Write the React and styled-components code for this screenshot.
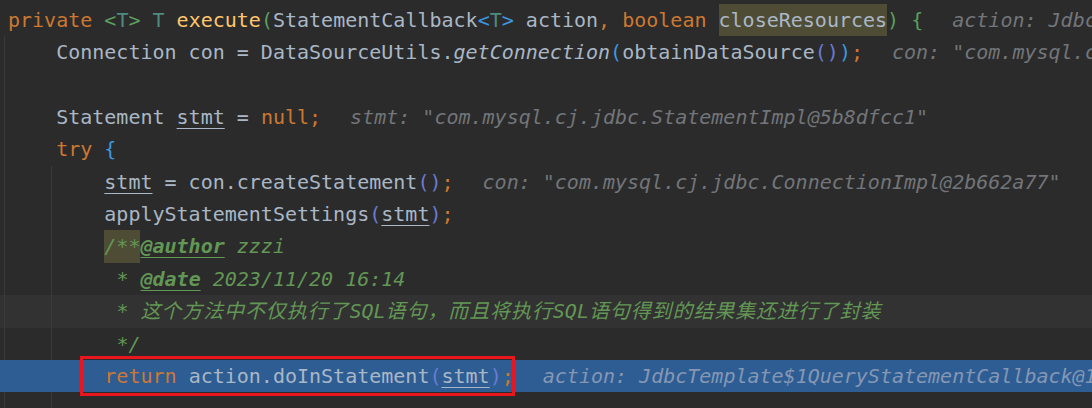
import React from "react";
import styled, { createGlobalStyle } from "styled-components";

const colors = {
  bg: "#2B2B2B",
  caretRow: "#323232",
  execRow: "#2E5D94",
  guide: "#3A3A3A",
  text: "#A9B7C6",
  keyword: "#CC7832",
  method: "#FFC66D",
  typeParam: "#4E8A80",
  doc: "#629755",
  hint: "#727579",
  hintOnExec: "#8497B3",
  parenGreen: "#5A9F5E",
  parenBlue: "#3C98E0",
  parenPurple: "#6A7BD3",
  usage: "#4F4C36",
  box: "#E8161F",
};

const GlobalStyle = createGlobalStyle`
  html, body {
    margin: 0;
    padding: 0;
    background: ${colors.bg};
  }
`;

const Editor = styled.div`
  width: 1092px;
  height: 408px;
  overflow: hidden;
  background: ${colors.bg};
  padding-top: 3.6px;
  box-sizing: border-box;
  font-family: "DejaVu Sans Mono", "Noto Sans CJK SC", monospace;
  font-size: 20px;
  color: ${colors.text};
`;

const guideAt = (x) =>
  `linear-gradient(to right, transparent ${x}px, ${colors.guide} ${x}px, ${colors.guide} ${x + 1}px, transparent ${x + 1}px)`;

const Line = styled.div`
  position: relative;
  height: 32.4px;
  line-height: 32.4px;
  padding-left: 8px;
  white-space: pre;
  background-color: ${(p) =>
    p.$exec ? colors.execRow : p.$caret ? colors.caretRow : "transparent"};
  background-image: ${(p) =>
    p.$exec || !p.$guides
      ? "none"
      : p.$guides.map(guideAt).join(", ")};
`;

const Tok = styled.span`
  color: ${(p) => p.$c || colors.text};
  font-style: ${(p) => (p.$i ? "italic" : "normal")};
  font-weight: ${(p) => (p.$b ? "bold" : "normal")};
  text-decoration: ${(p) => (p.$u ? "underline" : "none")};
  text-underline-offset: 4px;
  text-decoration-thickness: 1px;
  background: ${(p) => (p.$hl ? colors.usage : "transparent")};
  display: inline-block;
  height: 32.4px;
`;

const Cjk = styled.span`
  letter-spacing: 0.9px;
`;

const Hint = styled.span`
  margin-left: 29px;
  color: ${(p) => (p.$exec ? colors.hintOnExec : colors.hint)};
  font-style: italic;
`;

const RedBox = styled.span`
  position: absolute;
  left: 80px;
  top: -4px;
  width: 435px;
  height: 40px;
  border: 3px solid ${colors.box};
  box-sizing: border-box;
  pointer-events: none;
`;

const K = (props) => <Tok $c={colors.keyword} {...props} />;
const P = ({ $c, children }) => <Tok $c={$c}>{children}</Tok>;
const Doc = (props) => <Tok $c={colors.doc} $i {...props} />;

const G1 = [4];
const G2 = [4, 51];

export default function App() {
  return (
    <>
      <GlobalStyle />
      <Editor>
        <Line>
          <K>private </K>
          <P $c={colors.parenGreen}>&lt;</P>
          <Tok $c={colors.typeParam}>T</Tok>
          <P $c={colors.parenGreen}>&gt;</P>
          <Tok> </Tok>
          <Tok $c={colors.typeParam}>T </Tok>
          <Tok $c={colors.method}>execute</Tok>
          <P $c={colors.parenGreen}>(</P>
          <Tok>StatementCallback</Tok>
          <P $c={colors.parenBlue}>&lt;</P>
          <Tok $c={colors.typeParam}>T</Tok>
          <P $c={colors.parenBlue}>&gt;</P>
          <Tok> action</Tok>
          <K>, boolean </K>
          <Tok $hl>closeResources</Tok>
          <P $c={colors.parenGreen}>)</P>
          <Tok> </Tok>
          <P $c={colors.parenGreen}>{"{"}</P>
          <Hint>action: JdbcTemplate$1QueryStatementCallback@1d3b4f6e</Hint>
        </Line>

        <Line $guides={G1}>
          <Tok>{"    Connection con = DataSourceUtils."}</Tok>
          <Tok $i>getConnection</Tok>
          <P $c={colors.parenBlue}>(</P>
          <Tok>obtainDataSource</Tok>
          <P $c={colors.parenPurple}>()</P>
          <P $c={colors.parenBlue}>)</P>
          <K>;</K>
          <Hint>con: "com.mysql.cj.jdbc.ConnectionImpl@2b662a77"</Hint>
        </Line>

        <Line $guides={G1} />

        <Line $guides={G1}>
          <Tok>{"    Statement "}</Tok>
          <Tok $u>stmt</Tok>
          <Tok> = </Tok>
          <K>null;</K>
          <Hint>stmt: "com.mysql.cj.jdbc.StatementImpl@5b8dfcc1"</Hint>
        </Line>

        <Line $guides={G1}>
          <K>{"    try "}</K>
          <P $c={colors.parenBlue}>{"{"}</P>
        </Line>

        <Line $guides={G2}>
          <Tok>{"        "}</Tok>
          <Tok $u>stmt</Tok>
          <Tok> = con.createStatement</Tok>
          <P $c={colors.parenPurple}>()</P>
          <K>;</K>
          <Hint>con: "com.mysql.cj.jdbc.ConnectionImpl@2b662a77"</Hint>
        </Line>

        <Line $guides={G2}>
          <Tok>{"        applyStatementSettings"}</Tok>
          <P $c={colors.parenPurple}>(</P>
          <Tok $u>stmt</Tok>
          <P $c={colors.parenPurple}>)</P>
          <K>;</K>
        </Line>

        <Line $guides={G2}>
          <Tok>{"        "}</Tok>
          <Doc $hl>/**</Doc>
          <Doc $b $u>@author</Doc>
          <Doc> zzzi</Doc>
        </Line>

        <Line $guides={G2}>
          <Tok>{"         "}</Tok>
          <Doc>* </Doc>
          <Doc $b $u>@date</Doc>
          <Doc> 2023/11/20 16:14</Doc>
        </Line>

        <Line $guides={G2} $caret>
          <Tok>{"         "}</Tok>
          <Doc>
            * <Cjk>这个方法中不仅执行了</Cjk>SQL<Cjk>语句，而且将执行</Cjk>SQL
            <Cjk>语句得到的结果集还进行了封装</Cjk>
          </Doc>
        </Line>

        <Line $guides={G2}>
          <Tok>{"         "}</Tok>
          <Doc>*/</Doc>
        </Line>

        <Line $exec>
          <K>{"        return "}</K>
          <Tok>action.doInStatement</Tok>
          <P $c={colors.parenPurple}>(</P>
          <Tok $u>stmt</Tok>
          <P $c={colors.parenPurple}>)</P>
          <K>;</K>
          <Hint $exec>action: JdbcTemplate$1QueryStatementCallback@1d3b4f6e</Hint>
          <RedBox />
        </Line>

        <Line $guides={G2} />
      </Editor>
    </>
  );
}
